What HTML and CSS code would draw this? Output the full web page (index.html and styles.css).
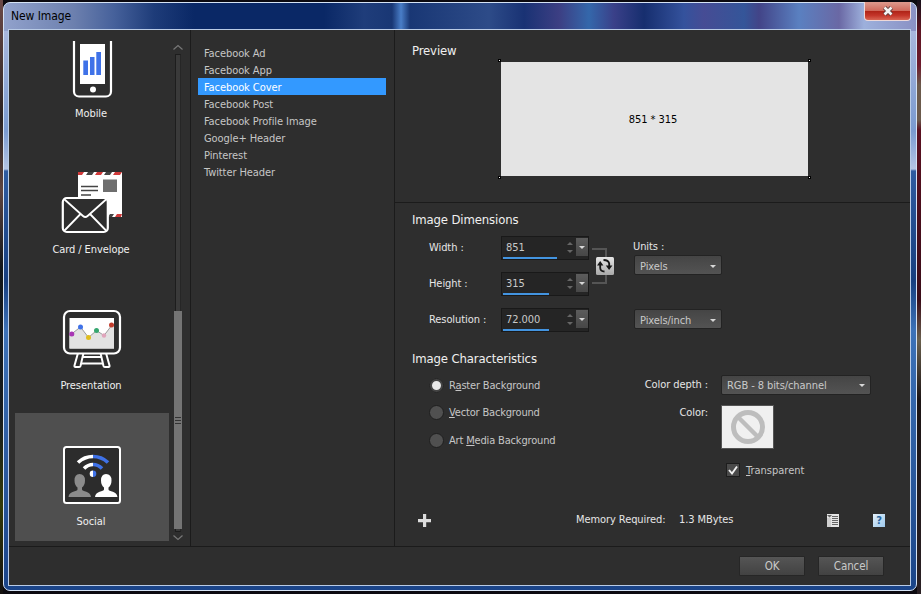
FILE: index.html
```
<!DOCTYPE html>
<html lang="en">

<head>
    <meta charset="UTF-8">
    <meta name="viewport" content="width=device-width, initial-scale=1.0">
    <title>New Image</title>
    <link rel="stylesheet" href="styles.css">
</head>

<body>
    <div class="window">
        <div class="titlebar">
            <span class="title">New Image</span>
            <button class="close" aria-label="Close">
                <svg width="14" height="12" viewBox="0 0 14 12">
                    <path d="M3.500 2.500l7 7M10.500 2.500l-7 7" stroke="#5b3a3a" stroke-width="4.400" />
                    <path d="M3.500 2.500l7 7M10.500 2.500l-7 7" stroke="#f4f4f4" stroke-width="2.600" />
                </svg>
            </button>
        </div>

        <div class="client">
            <div class="panes">
                <!-- Categories -->
                <div class="sidebar">
                    <div class="categories">
                        <div class="category">
                            <svg width="64" height="64" viewBox="0 0 64 64">
                                <rect x="14" y="-4" width="37" height="65.500" rx="5" fill="none" stroke="#fff" stroke-width="2.200" />
                                <rect x="20" y="9" width="25" height="40" fill="#fff" />
                                <path d="M23.300 25.500h4.700v14.500h-4.700zM30 22h4.500v18h-4.500zM36.300 17h4.700v23h-4.700z" fill="#3f72e8" />
                                <circle cx="33" cy="54.500" r="3" fill="#fff" />
                            </svg>
                            <span class="label">Mobile</span>
                        </div>
                        <div class="category">
                            <svg width="64" height="64" viewBox="0 0 64 64">
                                <rect x="18" y="1" width="44" height="45" fill="#fff" />
                                <path d="M18 1h6l-2 3h-4zM37 1h6l-2 3h-6zM55 1h7l-2 3h-7zM57 43h5l-1 3h-6z" fill="#d03a3a" />
                                <path d="M28 1h6l-2 3h-6zM46 1h6l-2 3h-6zM50 43h4l-2 3h-4z" fill="#444" />
                                <path d="M21 15.500h17M21 19.500h17M21 24h10" stroke="#444" stroke-width="1.300" />
                                <rect x="43" y="8.500" width="14" height="12.500" fill="#6e6e6e" />
                                <rect x="2.800" y="27" width="45" height="34" rx="4" fill="#2e2e2e" stroke="#fff" stroke-width="2.200" />
                                <path d="M4 28l19 17q2.300 2 4.600 0l19-17M4 60l16.500-17M46.500 60l-16.500-17" fill="none" stroke="#fff" stroke-width="1.800" />
                            </svg>
                            <span class="label">Card / Envelope</span>
                        </div>
                        <div class="category">
                            <svg width="64" height="64" viewBox="0 0 64 64">
                                <path d="M22 50h20M21 56.500h22" stroke="#fff" stroke-width="2" />
                                <path d="M18 46l-3.500 12.500q-.3 1.500 1 1.500h3.700q1 0 1.300-1l3-13M46 46l3.500 12.500q.3 1.500-1 1.500h-3.700q-1 0-1.300-1l-3-13" fill="#2e2e2e" stroke="#fff" stroke-width="2" />
                                <rect x="4" y="4" width="56" height="42.500" rx="6" fill="#2e2e2e" stroke="#fff" stroke-width="2.200" />
                                <rect x="9.500" y="11" width="44.500" height="30.500" fill="#fff" />
                                <path d="M9.500 29l2-2 9-7 8 10.500 8-7 7.500 5 8-10.500 2 2v21.500h-44.500z" fill="#e2e2e2" />
                                <path d="M11.500 27l9-7 8 10.500 8-7 7.500 5 8-10.500" fill="none" stroke="#9b9b9b" />
                                <circle cx="11.800" cy="27" r="2.500" fill="#a936b5" />
                                <circle cx="20.500" cy="20" r="2.500" fill="#3f72e8" />
                                <circle cx="28.500" cy="30.500" r="2.500" fill="#e0bd1e" />
                                <circle cx="36.500" cy="23.500" r="2.500" fill="#35a66f" />
                                <circle cx="44" cy="28.500" r="2.200" fill="#e0a5bc" />
                                <circle cx="51.500" cy="18" r="2.500" fill="#c23c2c" />
                            </svg>
                            <span class="label">Presentation</span>
                        </div>
                        <div class="category selected">
                            <svg width="64" height="64" viewBox="0 0 64 64">
                                <rect x="4" y="4" width="56" height="56" rx="2.500" fill="#2c2c2c" stroke="#fff" stroke-width="2" />
                                <g fill="none" stroke-width="3.600">
                                    <path d="M18 19.500q6.500-6 15-6M24 25.500q4-4 9-4" stroke="#fff" />
                                    <path d="M48 19.500q-6.500-6-15-6M42 25.500q-4-4-9-4" stroke="#3f72e8" />
                                </g>
                                <path d="M33 27.500a3.300 3.300 0 0 0 0 6.600z" fill="#fff" />
                                <path d="M33 27.500a3.300 3.300 0 0 1 0 6.600z" fill="#3f72e8" />
                                <path d="M19.500 31q5.500 0 5.500 6.500 0 4.500-3 7v2c0 2 8.500 1.500 9 7.500h-22.500c.5-6 9-5.500 9-7.500v-2q-3-2.500-3-7 0-6.500 5-6.500z" fill="#8b8b8b" />
                                <path d="M46 31q5.500 0 5.500 6.500 0 4.500-3 7v2c0 2 8.500 1.500 9 7.500h-22.500c.5-6 9-5.500 9-7.500v-2q-3-2.500-3-7 0-6.500 5-6.500z" fill="#fff" />
                            </svg>
                            <span class="label">Social</span>
                        </div>
                    </div>
                    <div class="scrollbar">
                        <svg width="12" height="12" viewBox="0 0 12 12"><path d="M1.500 7.500l4.500-4 4.500 4" fill="none" stroke="#777" stroke-width="1.200" /></svg>
                        <div class="track">
                            <div class="thumb"><i></i><i></i><i></i></div>
                        </div>
                        <svg width="12" height="12" viewBox="0 0 12 12"><path d="M1.500 3.500l4.500 4 4.500-4" fill="none" stroke="#777" stroke-width="1.200" /></svg>
                    </div>
                </div>

                <!-- Presets -->
                <div class="presets">
                    <div class="preset">Facebook Ad</div>
                    <div class="preset">Facebook App</div>
                    <div class="preset active">Facebook Cover</div>
                    <div class="preset">Facebook Post</div>
                    <div class="preset">Facebook Profile Image</div>
                    <div class="preset">Google+ Header</div>
                    <div class="preset">Pinterest</div>
                    <div class="preset">Twitter Header</div>
                </div>

                <!-- Settings -->
                <div class="settings">
                    <div class="preview">
                        <h2>Preview</h2>
                        <div class="canvas">
                            <b class="handle tl"></b><b class="handle tr"></b>
                            <b class="handle bl"></b><b class="handle br"></b>
                            851 * 315
                        </div>
                    </div>

                    <div class="options">
                        <h2>Image Dimensions</h2>
                        <div class="dimensions">
                            <div class="fields">
                                <div class="field">
                                    <label>Width :</label>
                                    <div class="spin">
                                        <span class="value">851</span>
                                        <span class="arrows"><i class="up"></i><i class="down"></i></span>
                                        <span class="drop"><i class="caret"></i></span>
                                        <span class="bar"><i style="width: 54px"></i></span>
                                    </div>
                                </div>
                                <div class="field">
                                    <label>Height :</label>
                                    <div class="spin">
                                        <span class="value">315</span>
                                        <span class="arrows"><i class="up"></i><i class="down"></i></span>
                                        <span class="drop"><i class="caret"></i></span>
                                        <span class="bar"><i style="width: 46px"></i></span>
                                    </div>
                                </div>
                                <div class="field">
                                    <label>Resolution :</label>
                                    <div class="spin">
                                        <span class="value">72.000</span>
                                        <span class="arrows"><i class="up"></i><i class="down"></i></span>
                                        <span class="drop"><i class="caret"></i></span>
                                        <span class="bar"><i style="width: 46px"></i></span>
                                    </div>
                                </div>
                            </div>
                            <svg class="link" width="24" height="40" viewBox="0 0 24 40">
                                <defs>
                                    <linearGradient id="key" x2="0" y2="1">
                                        <stop offset="0" stop-color="#e6e6e6" />
                                        <stop offset="1" stop-color="#a9a9a9" />
                                    </linearGradient>
                                </defs>
                                <path d="M1 3h14v34h-14" fill="none" stroke="#555" stroke-width="2" />
                                <rect x="5" y="11" width="18" height="18" rx="1.500" fill="url(#key)" />
                                <path d="M13.500 25.500q-4 0-4.300-3.500v-4M12.500 14q5 0 5.700 3.500v3.500" fill="none" stroke="#161616" stroke-width="1.800" />
                                <path d="M6 19.500l3.200-4.500 3.200 4.500zM14.800 19.500l3.300 4.500 3.300-4.500z" fill="#161616" />
                            </svg>
                            <div class="units">
                                <label>Units :</label>
                                <div class="select">Pixels<i class="caret"></i></div>
                                <div class="select">Pixels/inch<i class="caret"></i></div>
                            </div>
                        </div>

                        <h2>Image Characteristics</h2>
                        <div class="characteristics">
                            <div class="radios">
                                <div class="radio on"><i></i><span>R<u>a</u>ster Background</span></div>
                                <div class="radio"><i></i><span><u>V</u>ector Background</span></div>
                                <div class="radio"><i></i><span>Art <u>M</u>edia Background</span></div>
                            </div>
                            <div class="color">
                                <label>Color depth :</label>
                                <div class="select">RGB - 8 bits/channel<i class="caret"></i></div>
                                <label>Color:</label>
                                <div class="swatch">
                                    <svg width="36" height="36" viewBox="0 0 36 36">
                                        <circle cx="18" cy="18" r="14.500" fill="none" stroke="#bdbdbd" stroke-width="5" />
                                        <path d="M8 8l20 20" stroke="#bdbdbd" stroke-width="4.500" />
                                    </svg>
                                </div>
                                <div class="check">
                                    <svg width="14" height="14" viewBox="0 0 14 14">
                                        <rect x=".5" y=".5" width="13" height="13" fill="#4a4a4a" stroke="#1d1d1d" />
                                        <path d="M3 7l3 3.500 5-7" fill="none" stroke="#f2f2f2" stroke-width="1.900" />
                                    </svg>
                                    <span><u>T</u>ransparent</span>
                                </div>
                            </div>
                        </div>
                    </div>

                    <div class="status">
                        <svg width="13" height="13" viewBox="0 0 13 13"><path d="M5 0h3.200v5h4.800v3.200h-4.800v4.800h-3.200v-4.800h-5v-3.200h5z" fill="#dcdcdc" /></svg>
                        <span class="memory">Memory Required:</span>
                        <span class="bytes">1.3 MBytes</span>
                        <svg width="12" height="13" viewBox="0 0 12 13">
                            <path d="M0 0h12v13h-12z" fill="#e6e6e6" />
                            <path d="M0 4h4v9h-4z" fill="#cfcfcf" />
                            <path d="M0 1h5l-2.500 2.500zM5 2h6v1h-6zM5 4h6v1h-6zM5 6h6v1h-6zM5 8h6v1h-6zM5 10h6v1h-6z" fill="#666" />
                        </svg>
                        <span class="help">?</span>
                    </div>
                </div>
            </div>

            <div class="footer">
                <button class="btn">OK</button>
                <button class="btn">Cancel</button>
            </div>
        </div>
    </div>
</body>

</html>
```
FILE: styles.css
```
* {
    box-sizing: border-box;
}

body {
    margin: 0;
    width: 921px;
    height: 594px;
    padding: 2px 4px 3px 3px;
    overflow: hidden;
    font-family: "DejaVu Sans Condensed", "Noto Sans", sans-serif;
    font-size: 11px;
    letter-spacing: -0.08px;
    color: #e6e6e6;
    background:
        linear-gradient(#15101a 0, #5c1522 30px, #6e1a2c 65px, #6b5a4c 85px, #6b5a4c 120px, #5a1020 130px, #3a0c18 300px, #6a604e 340px, #1c1414 400px, #2a2024) right / 4px 100% no-repeat,
        linear-gradient(#6b4a48 0, #2a2222 20%, #5e4440 32%, #12161a 45%, #171b1d 70%, #343a08 85%, #14100f) left / 3px 100% no-repeat,
        #0c0a10;
}

/* Window frame */
.window {
    height: 589px;
    padding: 0 5px 4px 4px;
    border: 1px solid #d5e3f5;
    border-radius: 7px;
    background:
        linear-gradient(90deg, rgba(160, 175, 215, 0.9) 0, rgba(150, 165, 205, 0.7) 70px, rgba(110, 135, 190, 0.6) 110px, rgba(60, 90, 150, 0.4) 150px, transparent 190px, transparent 320px, rgba(80, 110, 170, 0.3) 360px, rgba(60, 90, 150, 0.3) 388px, rgba(80, 135, 210, 0.9) 397px, rgba(60, 90, 150, 0.3) 406px, rgba(80, 110, 170, 0.5) 485px, rgba(40, 60, 130, 0.5) 520px, rgba(110, 85, 160, 0.5) 555px, rgba(70, 130, 200, 0.7) 585px, rgba(90, 80, 160, 0.6) 610px, rgba(50, 60, 130, 0.3) 640px, rgba(70, 100, 180, 0.7) 680px, rgba(85, 85, 160, 0.8) 700px, rgba(70, 105, 175, 0.7) 740px, rgba(90, 80, 150, 0.7) 755px, rgba(110, 150, 215, 0.8) 795px, rgba(130, 120, 180, 0.8) 835px, #9db0dc 860px, #8a91c4) top / 100% 28px no-repeat,
        linear-gradient(#a8b6dc 0, #7a9ad0 100px, #b5c4e4 138px, #2f5ba0 140px, #173f80 250px, #3d72b8 300px, #1b4488) bottom / 100% calc(100% - 28px) no-repeat,
        #0a2866;
}

.titlebar {
    display: flex;
    justify-content: space-between;
    align-items: flex-start;
    height: 26px;
    padding-left: 3px;
}

.title {
    font-size: 12px;
    line-height: 26px;
    color: #000;
}

.close {
    display: flex;
    align-items: center;
    justify-content: center;
    width: 47px;
    height: 19px;
    margin-top: -1px;
    padding: 0;
    border: 1px solid #eed8d8;
    border-top: 0;
    border-radius: 0 0 4px 4px;
    background: linear-gradient(#dc9a8e 0, #cf6a5c 48%, #b02418 52%, #c4362a 75%, #d86553);
}

.client {
    height: 557px;
    border: 1px solid #b9cbe6;
    background: #2e2e2e;
    display: flex;
    flex-direction: column;
}

.panes {
    display: flex;
    height: 517px;
    border-bottom: 1px solid #1b1b1b;
}

/* Categories */
.sidebar {
    display: flex;
    flex: none;
    width: 182px;
    padding: 11px 6px 4px;
    border-right: 1px solid #1b1b1b;
}

.categories {
    display: flex;
    flex-direction: column;
    justify-content: flex-end;
    gap: 8px;
    width: 154px;
    height: 500px;
    overflow: hidden;
}

.category {
    display: flex;
    flex-direction: column;
    align-items: center;
    flex: none;
    height: 128px;
    padding: 30px 2px 0 0;
}

.category svg {
    margin-left: 2px;
}

.label {
    margin-top: 7px;
    line-height: 16px;
    color: #f0f0f0;
    white-space: nowrap;
}

.category.selected {
    background: #4f4f4f;
}

.scrollbar {
    display: flex;
    flex-direction: column;
    align-items: center;
    width: 12px;
    height: 502px;
    margin: 1px 0 0 3px;
}

.track {
    width: 6px;
    flex: 1;
    background: #3a3a3a;
    border: 1px solid #1d1d1d;
    border-right-color: #262626;
}

.thumb {
    display: flex;
    flex-direction: column;
    align-items: center;
    justify-content: center;
    gap: 2px;
    width: 8px;
    height: 218px;
    margin: 256px 0 0 -2px;
    background: #747474;
}

.thumb i {
    width: 6px;
    height: 1px;
    background: #333;
}

/* Presets */
.presets {
    flex: none;
    width: 204px;
    padding: 14px 8px 0 7px;
    border-right: 1px solid #1b1b1b;
}

.preset {
    height: 17px;
    padding: 1px 0 0 6px;
    line-height: 17px;
    color: #c6c6c6;
}

.preset.active {
    background: #3399ff;
    color: #fff;
}

/* Settings */
.settings {
    flex: 1;
    min-width: 0;
}

h2 {
    margin: 0;
    font-size: 13px;
    font-weight: normal;
    line-height: 18px;
    letter-spacing: -0.14px;
    color: #f0f0f0;
}

.preview {
    height: 173px;
    padding: 12px 0 0 17px;
    border-bottom: 1px solid #1b1b1b;
}

.canvas {
    position: relative;
    width: 307px;
    height: 114px;
    margin: 2px 0 0 89px;
    background: #e4e4e4;
    color: #000;
    line-height: 116px;
    text-align: center;
    padding-right: 3px;
}

.handle {
    position: absolute;
    width: 3px;
    height: 3px;
    border: 1px solid #000;
    background: #fff;
}

.tl { left: -3px; top: -3px; }
.tr { right: -3px; top: -3px; }
.bl { left: -3px; bottom: -3px; }
.br { right: -3px; bottom: -3px; }

.options {
    height: 290px;
    padding: 8px 0 0 17px;
}

.dimensions {
    display: flex;
    height: 121px;
    padding: 7px 0 0 17px;
}

.fields {
    display: flex;
    flex-direction: column;
    gap: 12px;
}

.field {
    display: flex;
    height: 24px;
}

.field label {
    width: 72px;
    line-height: 24px;
}

.spin {
    display: grid;
    grid-template-columns: 1fr 12px 12px;
    grid-template-rows: 18px 3px;
    width: 88px;
    border: 1px solid #191919;
    padding: 1px 0 0 1px;
    background: #252525;
}

.value {
    padding-left: 3px;
    line-height: 19px;
    color: #c9c9c9;
}

.arrows {
    display: flex;
    flex-direction: column;
    align-items: center;
    justify-content: center;
    gap: 5px;
}

.up,
.down,
.caret {
    border: 3px solid transparent;
    border-bottom: 0;
    border-top-color: #666;
}

.up {
    border: 3px solid transparent;
    border-top: 0;
    border-bottom-color: #666;
}

.caret {
    border-top-color: #d8d8d8;
}

.drop {
    display: flex;
    align-items: center;
    justify-content: center;
    background: linear-gradient(#5c5c5c, #474747);
}

.bar {
    grid-column: 1 / 4;
    height: 2px;
    margin-top: 1px;
}

.bar i {
    display: block;
    height: 2px;
    background: #4394e0;
}

.link {
    margin: 10px 0 0 2px;
}

.units {
    display: flex;
    flex-direction: column;
    width: 90px;
    margin-left: 18px;
}

.units label {
    height: 18px;
    line-height: 21px;
}

.select {
    display: flex;
    align-items: center;
    justify-content: space-between;
    width: 88px;
    height: 20px;
    padding: 0 5px;
    border: 1px solid #232323;
    border-radius: 2px;
    background: linear-gradient(#454545, #535353);
    color: #c9c9c9;
}

.units .select {
    margin: 1px 0 0 1px;
    padding-top: 2px;
}

.units .select + .select {
    margin-top: 34px;
}

.characteristics {
    display: flex;
    padding: 7px 0 0 17px;
}

.radios {
    width: 205px;
}

.radio {
    display: flex;
    align-items: center;
    height: 20px;
    margin-bottom: 7.5px;
    color: #c6c6c6;
    letter-spacing: -0.17px;
}

.radio i {
    width: 15px;
    height: 15px;
    margin-right: 5px;
    border: 1px solid #1f1f1f;
    border-radius: 50%;
    background: #505050;
}

.radio.on i {
    border: 3px solid #444;
    background: #e9e9e9;
    outline: 1px solid #222;
    outline-offset: -1px;
}

.color {
    display: grid;
    grid-template-columns: 74px 150px;
    grid-template-rows: 20px 44px 14px;
    row-gap: 10px;
    column-gap: 13px;
    text-align: right;
}

.color label {
    line-height: 19px;
    white-space: nowrap;
}

.color label:nth-of-type(2) {
    margin-top: -2px;
}

.color .select {
    width: 150px;
}

.swatch {
    display: flex;
    align-items: center;
    justify-content: center;
    width: 53px;
    height: 44px;
    background: #f0f0f0;
    border: 1px solid #555;
}

.check {
    grid-column: 2;
    display: flex;
    align-items: center;
    gap: 6px;
    margin: 8px 0 0 5px;
    color: #c6c6c6;
    letter-spacing: 0;
}

.status {
    display: flex;
    align-items: center;
    height: 52px;
    padding: 2px 0 0 23px;
}

.memory,
.bytes {
    margin-bottom: 2px;
}

.memory {
    width: 103px;
    margin-left: 145px;
}

.bytes {
    width: 148px;
}

.help {
    width: 12px;
    height: 13px;
    margin-left: 34px;
    background: linear-gradient(135deg, #e4f1fb, #9cc8ec);
    color: #28649c;
    font-weight: bold;
    line-height: 13px;
    text-align: center;
}

/* Buttons */
.footer {
    display: flex;
    justify-content: flex-end;
    gap: 13px;
    padding: 9px 26px 0 0;
}

.btn {
    width: 66px;
    height: 20px;
    padding: 0;
    border: 1px solid #262626;
    border-radius: 1px;
    background: linear-gradient(#555, #424242);
    color: #c9c9c9;
    font: inherit;
    font-size: 11.5px;
    letter-spacing: -0.1px;
}
```
